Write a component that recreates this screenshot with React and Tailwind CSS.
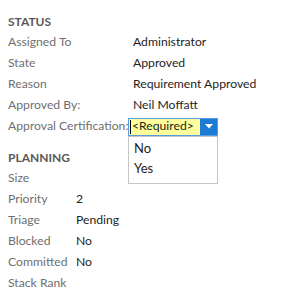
import React from 'react';

const statusRows = [
  { label: 'Assigned To', value: 'Administrator' },
  { label: 'State', value: 'Approved' },
  { label: 'Reason', value: 'Requirement Approved' },
  { label: 'Approved By:', value: 'Neil Moffatt' },
];

const planningRows = [
  { label: 'Size', value: '' },
  { label: 'Priority', value: '2' },
  { label: 'Triage', value: 'Pending' },
  { label: 'Blocked', value: 'No' },
  { label: 'Committed', value: 'No' },
  { label: 'Stack Rank', value: '' },
];

const Row = ({ label, value, labelWidth }) => (
  <div className="flex h-[21px] items-center whitespace-nowrap">
    <div className={`${labelWidth} shrink-0 text-[#6f6f6f]`}>{label}</div>
    <div className="text-[#1e1e1e]">{value}</div>
  </div>
);

const App = () => {
  return (
    <div
      className="w-[307px] h-[300px] bg-white pl-[8px] pt-[11px] text-[12.2px] overflow-hidden"
      style={{ fontFamily: '"Segoe UI", Lato, "Liberation Sans", sans-serif' }}
    >
      <div className="flex h-[21px] items-center text-[12px] font-bold text-[#595959]">STATUS</div>
      {statusRows.map((r) => (
        <Row key={r.label} label={r.label} value={r.value} labelWidth="w-[125px]" />
      ))}

      {/* approval row with open dropdown */}
      <div className="flex h-[21px] items-center whitespace-nowrap">
        <div className="w-[120px] shrink-0 text-[#6f6f6f]">Approval Certification:</div>
        <div className="relative">
          <div className="flex h-[18px] w-[90px] border border-[#569de5]">
            <div className="flex flex-1 items-center bg-[#ffff9c] pl-[1px] text-[#1e1e1e]">
              <span className="mr-[1px] h-[14px] w-px bg-black" />
              &lt;Required&gt;
            </div>
            <div className="flex w-[17px] items-center justify-center bg-[#1d7bd4]">
              <svg width="8" height="5" viewBox="0 0 8 5">
                <path d="M0 0h8L4 4.5z" fill="#fff" />
              </svg>
            </div>
          </div>
          <div className="absolute left-0 top-[18px] w-[90px] border border-[#c6c6c6] bg-white pb-[4px] pl-[5px] pt-[2px] text-[13px] text-[#1e1e1e]">
            <div className="flex h-[20px] items-center">No</div>
            <div className="flex h-[20px] items-center">Yes</div>
          </div>
        </div>
      </div>

      <div className="mt-[10px] flex h-[21px] items-center text-[12px] font-bold text-[#595959]">PLANNING</div>
      {planningRows.map((r) => (
        <Row key={r.label} label={r.label} value={r.value} labelWidth="w-[68px]" />
      ))}
    </div>
  );
};

export default App;
